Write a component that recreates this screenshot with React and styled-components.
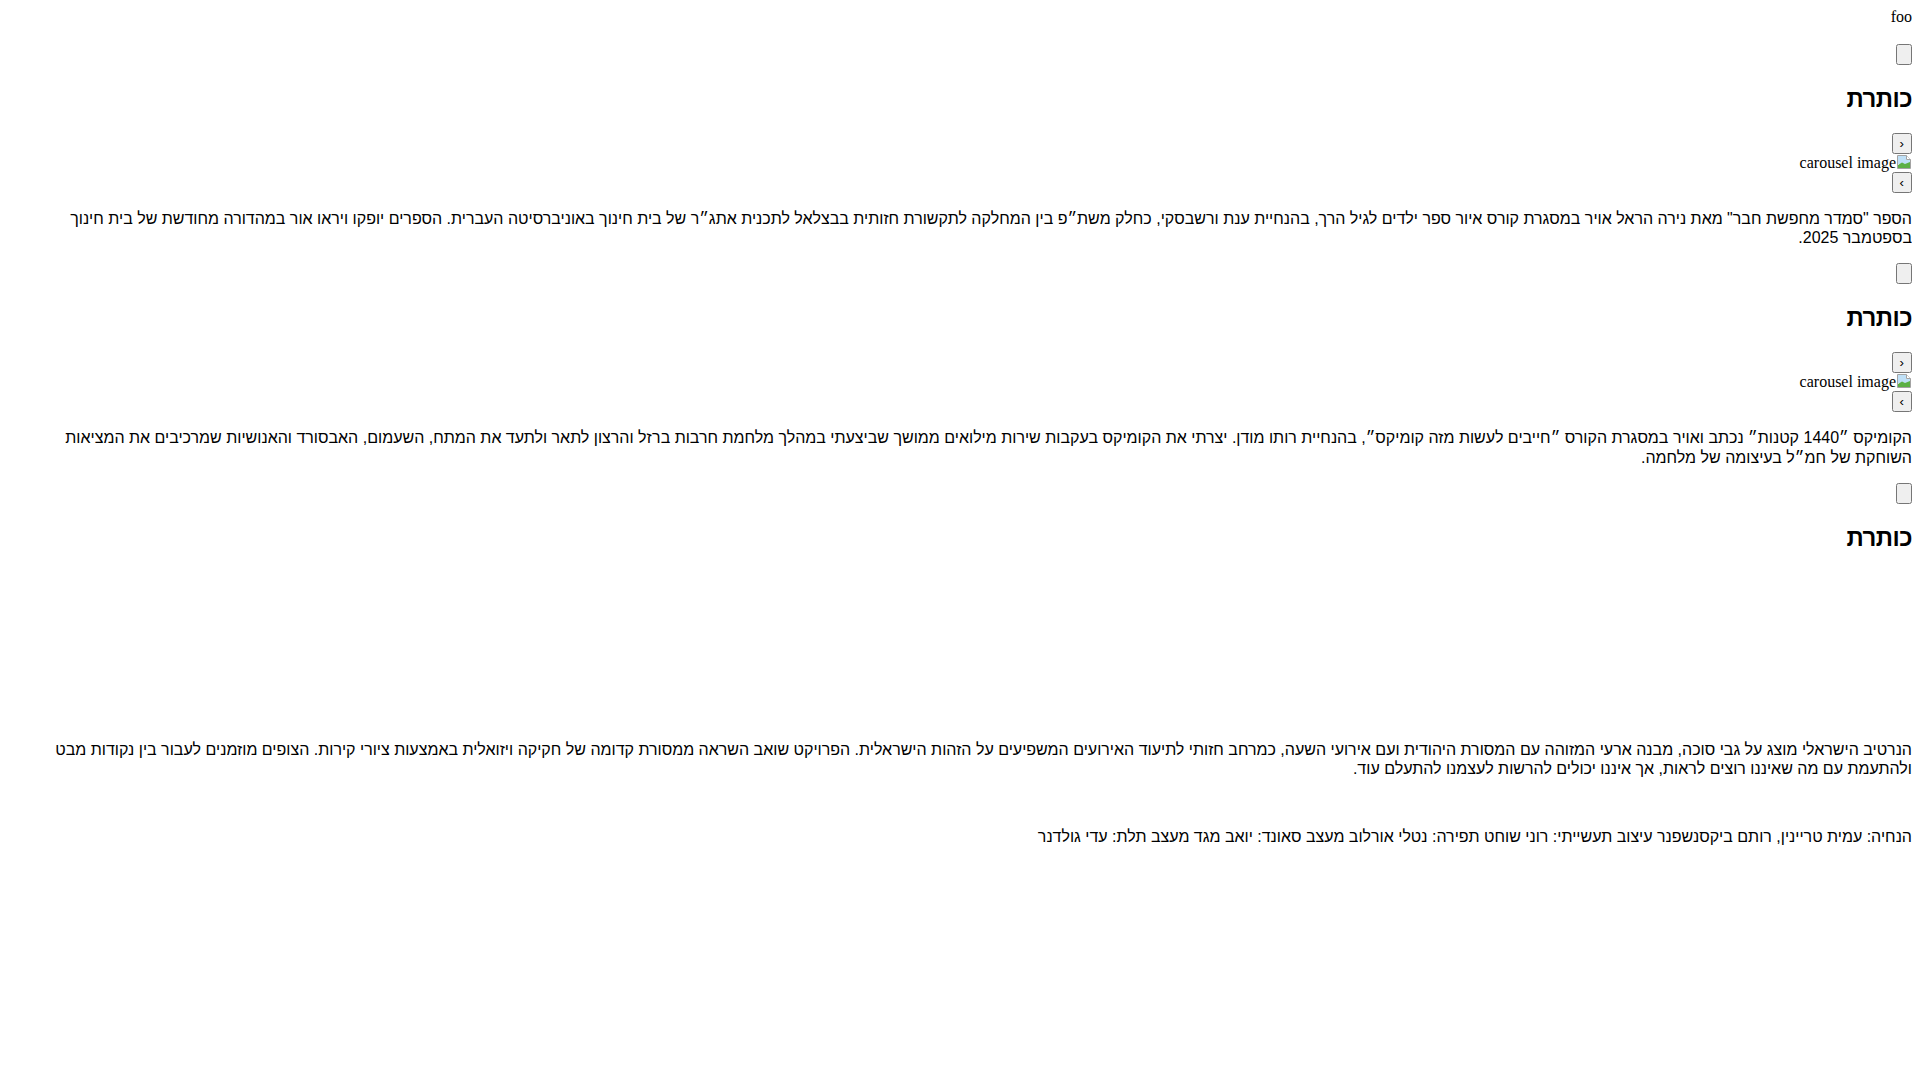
import React from 'react'
import styled, { createGlobalStyle } from 'styled-components'

const GlobalStyle = createGlobalStyle`
  body {
    margin: 8px;
    background: #fff;
    color: #000;
    font-family: "Liberation Serif", serif;
    font-size: 16px;
  }
`

const hebrewFont = `"Liberation Sans", Arial, sans-serif`

const Page = styled.div`
  direction: rtl;
`

const Header = styled.div`
  margin-bottom: 18px;
`

const ToggleButton = styled.button`
  display: block;
  width: 16px;
  height: 21px;
`

const Title = styled.h2`
  font-family: ${hebrewFont};
  font-size: 24px;
  font-weight: bold;
  letter-spacing: -0.5px;
  margin: 19.92px 0;
`

const NavButton = styled.button`
  display: block;
`

const ImageSlot = styled.div`
  line-height: normal;
`

const BrokenImage = styled.span`
  display: inline;
  svg {
    width: 16px;
    height: 16px;
    vertical-align: -2px;
  }
`

const MediaSlot = styled.div`
  width: 300px;
  height: 152px;
`

const Description = styled.p`
  font-family: ${hebrewFont};
  line-height: 19.3px;
  margin: 16px 0;
`

const Credits = styled.p`
  font-family: ${hebrewFont};
  line-height: 19.3px;
  margin: 49px 0 16px;
`

const BrokenIcon = () => (
  <svg viewBox="0 0 16 16">
    <path d="M1.5 1.5h9l4 4v9h-13z" fill="#fff" stroke="#a3a3a3" />
    <path d="M2 2h8v4h4v4H2z" fill="#bfe0f7" />
    <path d="M2 14V11l4-2.5 3 1.5 5-2v6z" fill="#5cb045" />
    <path d="M10.5 1.5v4h4" fill="#fff" stroke="#a3a3a3" />
  </svg>
)

const sections = [
  {
    carousel: true,
    text: 'הספר "סמדר מחפשת חבר" מאת נירה הראל אויר במסגרת קורס איור ספר ילדים לגיל הרך, בהנחיית ענת ורשבסקי, כחלק משת״פ בין המחלקה לתקשורת חזותית בבצלאל לתכנית אתג״ר של בית חינוך באוניברסיטה העברית. הספרים יופקו ויראו אור במהדורה מחודשת של בית חינוך בספטמבר 2025.',
  },
  {
    carousel: true,
    text: 'הקומיקס ״1440 קטנות״ נכתב ואויר במסגרת הקורס ״חייבים לעשות מזה קומיקס״, בהנחיית רותו מודן. יצרתי את הקומיקס בעקבות שירות מילואים ממושך שביצעתי במהלך מלחמת חרבות ברזל והרצון לתאר ולתעד את המתח, השעמום, האבסורד והאנושיות שמרכיבים את המציאות השוחקת של חמ״ל בעיצומה של מלחמה.',
  },
  {
    carousel: false,
    text: 'הנרטיב הישראלי מוצג על גבי סוכה, מבנה ארעי המזוהה עם המסורת היהודית ועם אירועי השעה, כמרחב חזותי לתיעוד האירועים המשפיעים על הזהות הישראלית. הפרויקט שואב השראה ממסורת קדומה של חקיקה ויזואלית באמצעות ציורי קירות. הצופים מוזמנים לעבור בין נקודות מבט ולהתעמת עם מה שאיננו רוצים לראות, אך איננו יכולים להרשות לעצמנו להתעלם עוד.',
  },
]

const Section = ({ carousel, text }) => (
  <section>
    <ToggleButton />
    <Title>כותרת</Title>
    {carousel ? (
      <>
        <NavButton>‹</NavButton>
        <ImageSlot>
          <BrokenImage>
            <BrokenIcon />
            carousel image
          </BrokenImage>
        </ImageSlot>
        <NavButton>›</NavButton>
      </>
    ) : (
      <MediaSlot />
    )}
    <Description>{text}</Description>
  </section>
)

export default function App() {
  return (
    <Page>
      <GlobalStyle />
      <Header>foo</Header>
      {sections.map((s, i) => (
        <Section key={i} {...s} />
      ))}
      <Credits>
        הנחיה: עמית טריינין, רותם ביקסנשפנר עיצוב תעשייתי: רוני שוחט תפירה: נטלי אורלוב מעצב סאונד: יואב מגד מעצב תלת: עדי גולדנר
      </Credits>
    </Page>
  )
}
